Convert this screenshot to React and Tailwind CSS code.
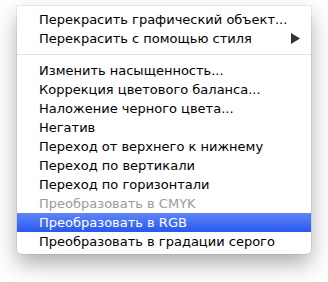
export default function App() {
  const items = [
    "Изменить насыщенность...",
    "Коррекция цветового баланса...",
    "Наложение черного цвета...",
    "Негатив",
    "Переход от верхнего к нижнему",
    "Переход по вертикали",
    "Переход по горизонтали",
  ];
  const row = "h-[19px] flex items-center pl-[22px] pr-[10px] whitespace-nowrap";
  return (
    <div className="w-[328px] h-[282px] bg-white pt-[6px] pl-[17px]" style={{ fontFamily: '"DejaVu Sans", sans-serif' }}>
      <div className="w-[294px] bg-white rounded-b-[5px] pt-[4px] pb-[3px] text-[13px] text-black shadow-[0_0_0_1px_rgba(0,0,0,0.06),0_10px_22px_rgba(0,0,0,0.32)]">
        <div className={row}>Перекрасить графический объект...</div>
        <div className={row + " justify-between"}>
          <span>Перекрасить с помощью стиля</span>
          <svg width="9" height="11" viewBox="0 0 9 11" className="mr-[1px]">
            <path d="M0 0 L9 5.5 L0 11 Z" fill="#333" />
          </svg>
        </div>
        <div className="h-[13px] flex items-center">
          <div className="w-full h-px bg-[#e3e3e3]" />
        </div>
        {items.map((t) => (
          <div key={t} className={row}>{t}</div>
        ))}
        <div className={row + " text-[#9b9b9b]"}>Преобразовать в CMYK</div>
        <div className={row + " text-white bg-gradient-to-b from-[#6184f6] to-[#2657f0]"}>Преобразовать в RGB</div>
        <div className={row}>Преобразовать в градации серого</div>
      </div>
    </div>
  );
}
